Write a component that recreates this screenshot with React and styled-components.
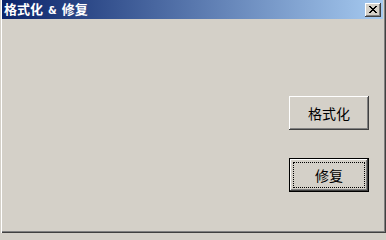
import styled, { createGlobalStyle } from "styled-components";

const GlobalStyle = createGlobalStyle`
  html, body {
    margin: 0;
    padding: 0;
    background: #d4d0c8;
  }
  body {
    font-family: "Noto Sans CJK SC", "Liberation Sans", sans-serif;
  }
`;

const Window = styled.div`
  width: 386px;
  height: 233px;
  box-sizing: border-box;
  display: flex;
  flex-direction: column;
  background: #d4d0c8;
  padding: 0 3px 3px 2px;
  box-shadow: inset 1px 0 #d4d0c8, inset 2px 0 #ffffff, inset -1px -1px #404040,
    inset -2px -2px #808080;
`;

const TitleBar = styled.div`
  height: 19px;
  display: flex;
  align-items: center;
  justify-content: space-between;
  padding: 0 2px;
  background: linear-gradient(to right, #0a246a, #a6caf0);
`;

const Title = styled.span`
  color: #ffffff;
  font-size: 13px;
  font-weight: bold;
  line-height: 19px;
  white-space: pre;
`;

const Amp = styled.span`
  font-size: 10px;
  font-weight: bold;
  font-family: "DejaVu Sans", sans-serif;
  margin: 0 5px;
`;

const CloseButton = styled.div`
  width: 16px;
  height: 14px;
  box-sizing: border-box;
  background: #d4d0c8;
  display: flex;
  align-items: center;
  justify-content: center;
  box-shadow: inset -1px -1px #404040, inset 1px 1px #ffffff,
    inset -2px -2px #808080;
`;

const Body = styled.div`
  flex: 1;
  display: flex;
  flex-direction: column;
  align-items: flex-end;
  padding: 77px 14px 0 0;
  gap: 28px;
`;

const Button = styled.button`
  position: relative;
  width: 80px;
  height: 34px;
  box-sizing: border-box;
  border: none;
  padding: 0;
  background: #d4d0c8;
  font-family: "Noto Sans CJK SC", sans-serif;
  font-size: 14px;
  color: #000000;
  box-shadow: ${({ $default }) =>
    $default
      ? "inset 0 0 0 1px #000, inset -2px -2px #404040, inset 2px 2px #ffffff, inset -3px -3px #808080"
      : "inset -1px -1px #404040, inset 1px 1px #ffffff, inset -2px -2px #808080"};
`;

const Focus = styled.span`
  position: absolute;
  inset: 4px;
  border: 1px dotted #000;
`;

const crossRows = [
  [0, 1, 6, 7],
  [1, 2, 5, 6],
  [2, 3, 4, 5],
  [3, 4],
  [2, 3, 4, 5],
  [1, 2, 5, 6],
  [0, 1, 6, 7],
];

function CloseGlyph() {
  return (
    <svg width="8" height="7" viewBox="0 0 8 7" shapeRendering="crispEdges">
      {crossRows.map((cols, y) =>
        cols.map((x) => (
          <rect key={`${x}-${y}`} x={x} y={y} width="1" height="1" fill="#000" />
        ))
      )}
    </svg>
  );
}

export default function App() {
  return (
    <>
      <GlobalStyle />
      <Window>
        <TitleBar>
          <Title>
            格式化<Amp>&amp;</Amp>修复
          </Title>
          <CloseButton>
            <CloseGlyph />
          </CloseButton>
        </TitleBar>
        <Body>
          <Button>格式化</Button>
          <Button $default>
            <Focus />
            修复
          </Button>
        </Body>
      </Window>
    </>
  );
}
